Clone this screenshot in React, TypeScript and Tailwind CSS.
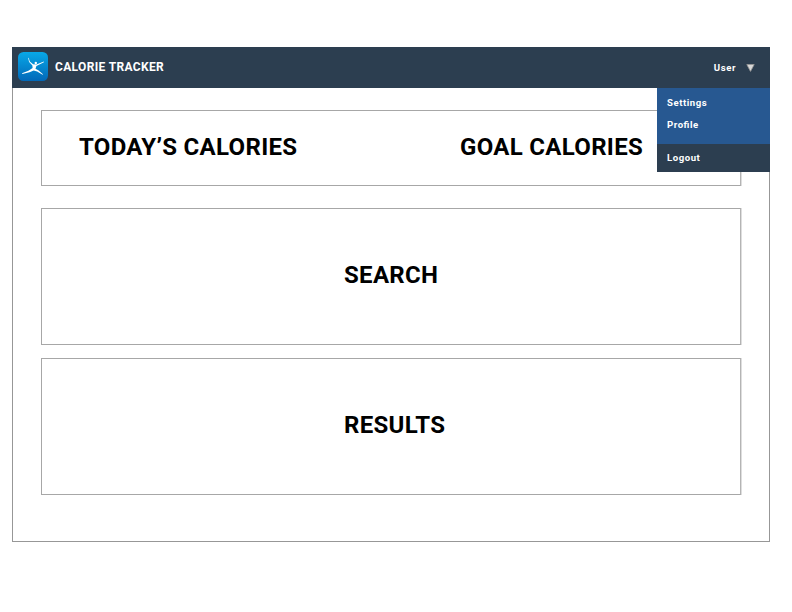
import React from "react";

function Logo() {
  return (
    <svg className="-mt-[2px] h-[29px] w-[30px] shrink-0" viewBox="0 0 30 29">
      <defs>
        <linearGradient id="tile" x1="0" y1="0" x2="0" y2="1">
          <stop offset="0" stopColor="#08a8e8" />
          <stop offset="1" stopColor="#0268b8" />
        </linearGradient>
      </defs>
      <rect width="30" height="29" rx="5.5" fill="url(#tile)" />
      <circle cx="17.8" cy="11" r="1.2" fill="#fff" />
      <path
        d="M10.1 5.8 L10.7 6 L11.8 9.6 L15.1 12.2 L18.4 12.4 L25.8 9.6 L25.9 10.2 L18.4 13.9 L17.5 16.7 L20.3 18.3 L25 22.3 L24.6 22.8 L19.2 19.6 L15.7 18.4 L11.5 20.2 L4.4 22 L4 21.3 L10.4 18.8 L14.6 15.9 L14.4 13.4 L11.1 10.1 Z"
        fill="#fff"
      />
    </svg>
  );
}

function UserMenu() {
  return (
    <div className="absolute top-[41px] right-0 w-[113px] text-[9.6px] leading-[22px] font-bold tracking-[0.55px] text-white [font-feature-settings:'liga']">
      <div className="h-14 bg-[#275891] pt-[4px] pl-[10px]">
        <div>Settings</div>
        <div>Profile</div>
      </div>
      <div className="h-7 bg-[#2c3e50] pt-[3px] pl-[10px]">Logout</div>
    </div>
  );
}

function Header() {
  return (
    <header className="relative flex h-[41px] items-center bg-[#2c3e50] pr-[15px] pl-[6px] text-white">
      <Logo />
      <h1 className="-mt-[2px] ml-[7px] text-[12px] leading-4 font-bold tracking-[0.34px] whitespace-nowrap">CALORIE TRACKER</h1>
      <div className="ml-auto flex items-center">
        <span className="text-[9.6px] leading-4 font-bold tracking-[0.55px]">User</span>
        <svg className="ml-[10px] h-[8px] w-[9px]" viewBox="0 0 9 8">
          <path d="M0.8 0.5H8.2L4.5 7.4Z" fill="#d8d8d8" stroke="#979797" strokeWidth="0.8" />
        </svg>
      </div>
      <UserMenu />
    </header>
  );
}

const panel =
  "flex border border-[#a7a7a7] border-r-[#b4b4b4] text-[24px] leading-8 font-bold tracking-[0.31px] whitespace-nowrap text-black shadow-[1px_0_0_#dedede]";

export default function App() {
  return (
    <div className="h-[612px] w-[792px] bg-white pt-[47px] pl-[12px] font-['Roboto',sans-serif]">
      <div className="w-[758px]">
        <Header />
        <main className="flex h-[454px] flex-col border border-t-0 border-[#979797] px-[28px] pt-[22px]">
          <section className={`${panel} h-[76px] pt-[20px] pl-[37px]`}>
            <h2 className="w-[381px]">TODAY’S CALORIES</h2>
            <h2>GOAL CALORIES</h2>
          </section>
          <section className={`${panel} mt-[22px] h-[137px] pt-[50px] pl-[302px]`}>
            <h2>SEARCH</h2>
          </section>
          <section className={`${panel} mt-[13px] h-[137px] pt-[50px] pl-[302px]`}>
            <h2>RESULTS</h2>
          </section>
        </main>
      </div>
    </div>
  );
}
